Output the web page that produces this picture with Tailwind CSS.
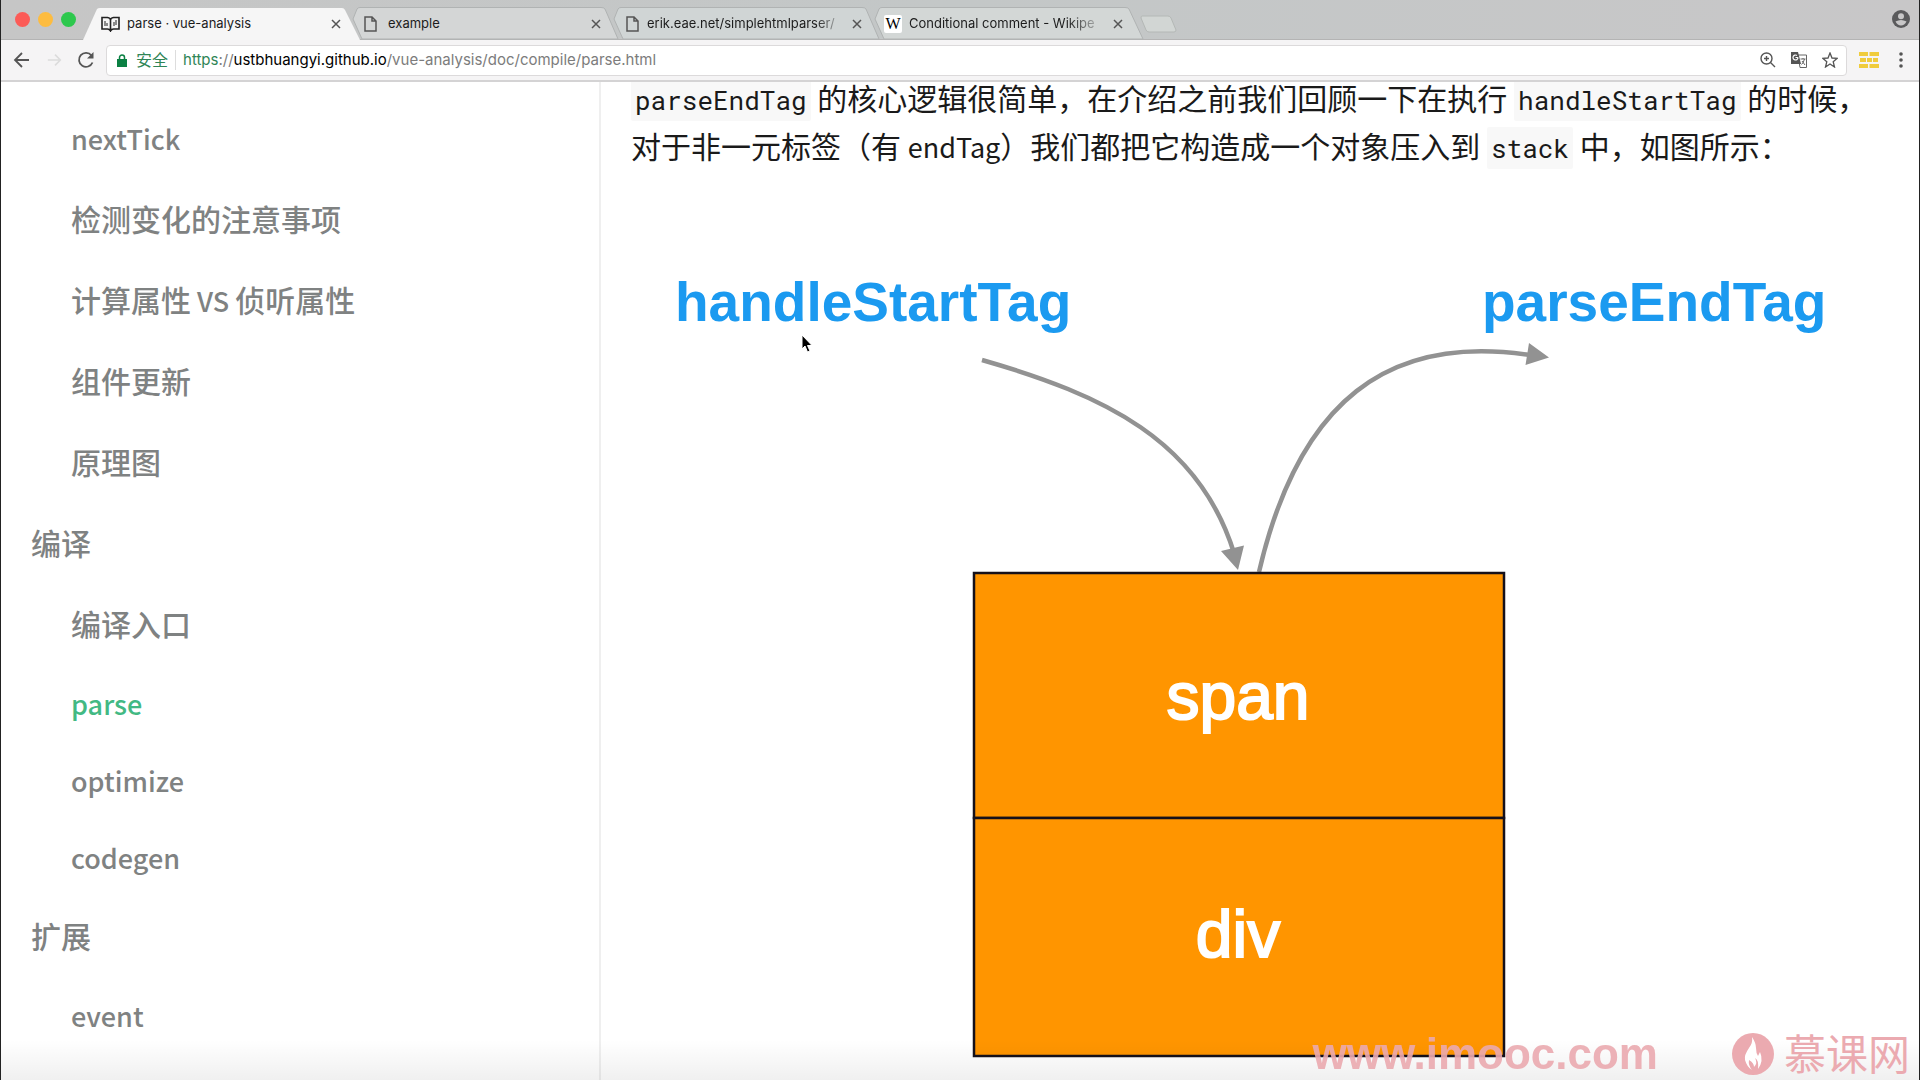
<!DOCTYPE html>
<html lang="zh-CN">
<head>
<meta charset="utf-8">
<title>parse · vue-analysis</title>
<script src="https://cdn.jsdelivr.net/npm/@tailwindcss/browser@4"></script>
</head>
<body class="h-screen overflow-hidden bg-white font-['Inter','Noto_Sans_CJK_SC',sans-serif]">
<div class="relative flex h-full flex-col border-x border-[#222]">

  <!-- Tab strip -->
  <header class="flex h-10 shrink-0 items-end border-b border-[#b4b4b4] bg-linear-to-r from-[#c6c6c6] via-[#c3c7c7] to-[#c8c7c8] text-[13px] text-[#1c1c1c]">
    <div class="flex h-10 w-[82px] items-center gap-2 pl-[14px]">
      <button aria-label="关闭窗口" class="size-[15px] rounded-full bg-[#fc5b57]"></button>
      <button aria-label="最小化" class="size-[15px] rounded-full bg-[#fdbc40]"></button>
      <button aria-label="全屏" class="size-[15px] rounded-full bg-[#2dc84d]"></button>
    </div>
    <nav class="flex h-8 min-w-0 items-end" aria-label="标签页">
      <div class="relative z-10 -mb-px flex h-[33px] w-[269px] items-center pr-2 pl-[18px]">
        <svg class="absolute inset-0 size-full overflow-visible" viewBox="0 0 269 33" preserveAspectRatio="none"><path d="M0 33 L14 2 Q15 1 17 1 H259 Q261 1 262 3 L277 33 Z" fill="#f6f6f6"/></svg>
        <svg class="relative h-4 w-[19px]" viewBox="0 0 19 16" fill="none" stroke="#222" stroke-width="1.6"><path d="M1 1.5h5.5q3 .5 3 2.5 0-2 3-2.500H18V13H12.500q-2 0-3 2-1-2-3-2H1ZM9.500 4v11"/><path d="M4 5v5M6 7v3M13 6v4M15 4v5" stroke-width="1"/></svg>
        <a href="#" class="relative ml-[7px] flex-1 whitespace-nowrap">parse · vue-analysis</a>
        <button aria-label="关闭标签页" class="relative size-4"><svg viewBox="0 0 16 16" stroke="#555" stroke-width="1.500"><path d="M4 4l8 8M12 4l-8 8"/></svg></button>
      </div>
      <div class="relative flex h-8 w-[261px] items-center pt-px pr-[9px] pl-[12px]">
        <svg class="absolute inset-0 size-full overflow-visible" viewBox="0 0 261 32" preserveAspectRatio="none"><path d="M10 32 L1 12 L5 2 Q6 .5 8 .5 H249 Q252 .5 253 2 L266 32 Z" fill="#d4d6d6" stroke="#b0b3b3"/></svg>
        <svg class="relative h-4 w-[13px]" viewBox="0 0 13 16" fill="none" stroke="#555" stroke-width="1.500"><path d="M1 1h7l4 4v10H1ZM8 1v4h4"/></svg>
        <a href="#" class="relative ml-[11px] flex-1 whitespace-nowrap">example</a>
        <button aria-label="关闭标签页" class="relative size-4"><svg viewBox="0 0 16 16" stroke="#555" stroke-width="1.500"><path d="M4 4l8 8M12 4l-8 8"/></svg></button>
      </div>
      <div class="relative flex h-8 w-[261px] items-center pt-px pr-[9px] pl-[13px]">
        <svg class="absolute inset-0 size-full overflow-visible" viewBox="0 0 261 32" preserveAspectRatio="none"><path d="M10 32 L1 12 L5 2 Q6 .5 8 .5 H249 Q252 .5 253 2 L266 32 Z" fill="#d0d5d5" stroke="#b0b3b3"/></svg>
        <svg class="relative h-4 w-[13px]" viewBox="0 0 13 16" fill="none" stroke="#555" stroke-width="1.500"><path d="M1 1h7l4 4v10H1ZM8 1v4h4"/></svg>
        <a href="#" class="relative ml-2 flex-1 overflow-hidden mask-r-from-85% whitespace-nowrap">erik.eae.net/simplehtmlparser/</a>
        <button aria-label="关闭标签页" class="relative ml-1 size-4"><svg viewBox="0 0 16 16" stroke="#555" stroke-width="1.500"><path d="M4 4l8 8M12 4l-8 8"/></svg></button>
      </div>
      <div class="relative flex h-8 w-[261px] items-center pt-px pr-[9px] pl-[10px]">
        <svg class="absolute inset-0 size-full overflow-visible" viewBox="0 0 261 32" preserveAspectRatio="none"><path d="M10 32 L1 12 L5 2 Q6 .5 8 .5 H251 Q254 .5 255 2 L269 32 Z" fill="#d3d7d6" stroke="#b0b3b3"/></svg>
        <span class="relative flex h-[18px] w-[18px] items-center justify-center rounded-xs bg-white font-['Liberation_Serif',serif] text-[16px] leading-none text-black">W</span>
        <a href="#" class="relative ml-[7px] flex-1 overflow-hidden mask-r-from-80% whitespace-nowrap">Conditional comment - Wikipe</a>
        <button aria-label="关闭标签页" class="relative ml-1 size-4"><svg viewBox="0 0 16 16" stroke="#555" stroke-width="1.500"><path d="M4 4l8 8M12 4l-8 8"/></svg></button>
      </div>
      <button aria-label="新标签页" class="ml-1 h-8 w-[38px]"><svg viewBox="0 0 38 32"><path d="M3 9H29q2 0 3 2l5 12q0 2-2 2H10q-2 0-3-2L2 11q0-2 1-2Z" fill="#d2d6d4" stroke="#b4b8b6"/></svg></button>
    </nav>
    <button aria-label="用户" class="mr-[9px] mb-[11px] ml-auto size-[18px]"><svg viewBox="0 0 18 18"><circle cx="9" cy="9" r="9" fill="#5a5a5c"/><circle cx="9" cy="6.200" r="3" fill="#c8c7c8"/><path d="M3.500 11.500q5.500-3 11 0-2 4-5.500 4t-5.500-4Z" fill="#c8c7c8"/></svg></button>
  </header>

  <!-- Toolbar -->
  <div class="flex h-[42px] shrink-0 items-center border-b-2 border-[#d4d3d4] bg-[#f5f4f5] pr-4 pl-3">
    <button aria-label="后退" class="size-[18px]"><svg viewBox="0 0 18 18" fill="none" stroke="#555" stroke-width="1.800"><path d="M16 9H2M9 2L2 9l7 7"/></svg></button>
    <button aria-label="前进" disabled class="ml-4 size-[16px]"><svg viewBox="0 0 18 18" fill="none" stroke="#dcdcdc" stroke-width="1.800"><path d="M1 9h14M9 3l6 6-6 6"/></svg></button>
    <button aria-label="刷新" class="ml-[14px] size-[18px]"><svg viewBox="0 0 18 18" fill="none" stroke="#555" stroke-width="1.800"><path d="M15.500 11.500A7 7 0 1 1 14.500 4.500"/><path d="M16.500 1v6.500H10Z" fill="#555" stroke="none"/></svg></button>
    <form class="ml-[11px] flex h-[31px] min-w-0 flex-1 items-center rounded-sm border border-[#dcdadb] bg-white pr-2 pl-[10px]">
      <svg class="h-[13px] w-[10px]" viewBox="0 0 10 13"><path d="M0 5h10v8H0Z" fill="#0b8043"/><path d="M2.500 6V3.500a2.500 2.500 0 0 1 5 0V6" fill="none" stroke="#0b8043" stroke-width="1.500"/></svg>
      <span class="ml-[9px] text-[16px] text-[#2f8556]">安全</span>
      <span class="mx-[7px] h-5 w-px bg-[#ddd]"></span>
      <a href="#" class="min-w-0 flex-1 truncate pt-px text-[15px] text-[#7c7c7c]"><span class="text-[#2f8556]">https</span>://<span class="text-black">ustbhuangyi.github.io</span>/vue-analysis/doc/compile/parse.html</a>
      <div class="flex items-center gap-[15px]">
        <button type="button" aria-label="缩放" class="size-4"><svg viewBox="0 0 16 16" fill="none" stroke="#555" stroke-width="1.400"><circle cx="6.500" cy="6.500" r="5.500"/><path d="M10.500 10.500L15 15M4 6.500h5M6.500 4v5"/></svg></button>
        <button type="button" aria-label="翻译" class="size-4"><svg viewBox="0 0 16 16"><path d="M7 3h8.500v12.500H9Z" fill="#fff" stroke="#666"/><path d="M0 0h7l3 12H0Z" fill="#555"/><path d="M7 5.500H4.500M7 5.500A2.500 2.500 0 1 1 6 3.500" fill="none" stroke="#fff" stroke-width="1.200"/><path d="M9.500 7h5M12 6v1M13.500 7q-1 4-3 5.500M11 9l3 4" fill="none" stroke="#666"/></svg></button>
        <button type="button" aria-label="收藏" class="size-4"><svg viewBox="0 0 16 16" fill="none" stroke="#555" stroke-width="1.300"><path d="M8 1l2 5 5.200.3-4 3.400L12.500 15 8 12l-4.500 3 1.300-5.300-4-3.400L6 6Z"/></svg></button>
      </div>
    </form>
    <button aria-label="扩展" class="ml-3 h-4 w-5"><svg viewBox="0 0 20 16" fill="#f0cc3c"><path d="M0 0h9v4H0ZM10.500 0H20v4h-9.500ZM1 6h6v4H1ZM8 6h5v4H8ZM14 6h5v4h-5ZM0 12h9v4H0ZM10.500 12H20v4h-9.500Z"/></svg></button>
    <button aria-label="菜单" class="ml-[20px] h-4 w-1"><svg viewBox="0 0 4 16" fill="#555"><circle cx="2" cy="2" r="1.800"/><circle cx="2" cy="8" r="1.800"/><circle cx="2" cy="14" r="1.800"/></svg></button>
  </div>

  <div class="flex min-h-0 flex-1 overflow-hidden font-['Noto_Sans_CJK_SC',sans-serif]">
    <!-- Chapter list -->
    <aside class="w-[600px] shrink-0 border-r-2 border-[#efefef] pt-[30px] pl-[30px] text-[30px] leading-[54px] font-medium text-[#7f8282]">
      <ul class="flex flex-col gap-[27px]">
        <li class="pl-10"><ul class="flex flex-col gap-[27px]">
          <li class="h-[52px] text-[27px]"><a href="#">nextTick</a></li>
          <li><a href="#">检测变化的注意事项</a></li>
          <li><a href="#">计算属性<span class="text-[27px] leading-none"> VS </span>侦听属性</a></li>
          <li><a href="#">组件更新</a></li>
          <li><a href="#">原理图</a></li>
        </ul></li>
        <li><a href="#">编译</a>
          <ul class="mt-[27px] flex flex-col gap-[27px] pl-10">
            <li><a href="#">编译入口</a></li>
            <li class="h-[50px] text-[27px]"><a href="#" class="text-[#42b983]">parse</a></li>
            <li class="h-[50px] text-[27px]"><a href="#">optimize</a></li>
            <li class="h-[50px] text-[27px]"><a href="#">codegen</a></li>
          </ul></li>
        <li><a href="#">扩展</a>
          <ul class="mt-[27px] pl-10 text-[27px]"><li><a href="#">event</a></li></ul></li>
      </ul>
    </aside>

    <!-- Article -->
    <main class="min-w-0 flex-1 pr-12 pl-[30px]">
      <p class="-mt-[9px] text-[30px] leading-[48px] whitespace-nowrap text-[#1a1a1a]"><code class="rounded-xs bg-[#f8f8f8] px-1 py-1 font-['Roboto_Mono','Liberation_Mono',monospace] text-[26px] leading-none">parseEndTag</code> 的核心逻辑很简单，在介绍之前我们回顾一下在执行 <code class="rounded-xs bg-[#f8f8f8] px-1 py-1 font-['Roboto_Mono','Liberation_Mono',monospace] text-[26px] leading-none">handleStartTag</code> 的时候，<br>对于非一元标签（有 <span class="text-[27px] leading-none">endTag</span>）我们都把它构造成一个对象压入到 <code class="rounded-xs bg-[#f8f8f8] px-1 py-1 font-['Roboto_Mono','Liberation_Mono',monospace] text-[26px] leading-none">stack</code> 中，如图所示：</p>
      <figure class="mt-[77px]">
        <svg class="block h-[812px] w-[1240px] max-w-none font-['Liberation_Sans',sans-serif]" viewBox="632 246 1240 812">
          <g fill="#1b9af0" font-size="55" font-weight="700"><text x="676" y="321">handleStartTag</text><text x="1483" y="321">parseEndTag</text></g>
          <g fill="none" stroke="#929292" stroke-width="4.500"><path d="M983 360C1105 395 1200 440 1235 553"/><path d="M1260 572C1300 400 1390 334 1530 355"/></g>
          <g fill="#929292"><path d="M1222 551L1245 545.500 1239 570ZM1530 343L1550 357.500 1526.500 365Z"/></g>
          <g fill="#ff9500" stroke="#15101a" stroke-width="2.500"><rect x="975" y="573" width="530" height="245"/><rect x="975" y="818" width="530" height="238"/></g>
          <g fill="#fff" stroke="#fff" stroke-width="2" font-size="66" text-anchor="middle"><text x="1239" y="719">span</text><text x="1239" y="957">div</text></g>
        </svg>
      </figure>
    </main>
  </div>

  <!-- Window shadow, watermark and pointer lie over the page -->
  <div class="pointer-events-none absolute inset-x-0 bottom-0 h-10 bg-linear-to-t from-black/6 to-transparent"></div>
  <div class="pointer-events-none absolute right-[9px] bottom-0 flex items-center text-[#ebaab0]">
    <span class="font-['Liberation_Sans',sans-serif] text-[44px] leading-[52px] font-bold opacity-90">www.imooc.com</span>
    <svg class="ml-[74px] size-[42px]" viewBox="0 0 42 42"><circle cx="21" cy="21" r="21" fill="#ebaab0"/><path d="M20 4q1 6-3 11-5 7-4 12 2 7 7 10-4-5-3-10 5 3 5 7 4-4 1-9 4 2 3 11 6-8 2-17l-2 4q-2-3-2-8t-4-11Z" fill="#fff"/></svg>
    <span class="ml-[10px] pb-1 font-['Noto_Sans_CJK_SC',sans-serif] text-[42px] leading-[48px]">慕课网</span>
  </div>
  <svg class="pointer-events-none absolute top-[334px] left-[800px] h-[19px] w-[13px]" viewBox="0 0 13 19"><path d="M1 1v14l3-3 2.500 6 2.500-1-2.500-5.500H11Z" fill="#000" stroke="#fff"/></svg>
</div>
</body>
</html>
